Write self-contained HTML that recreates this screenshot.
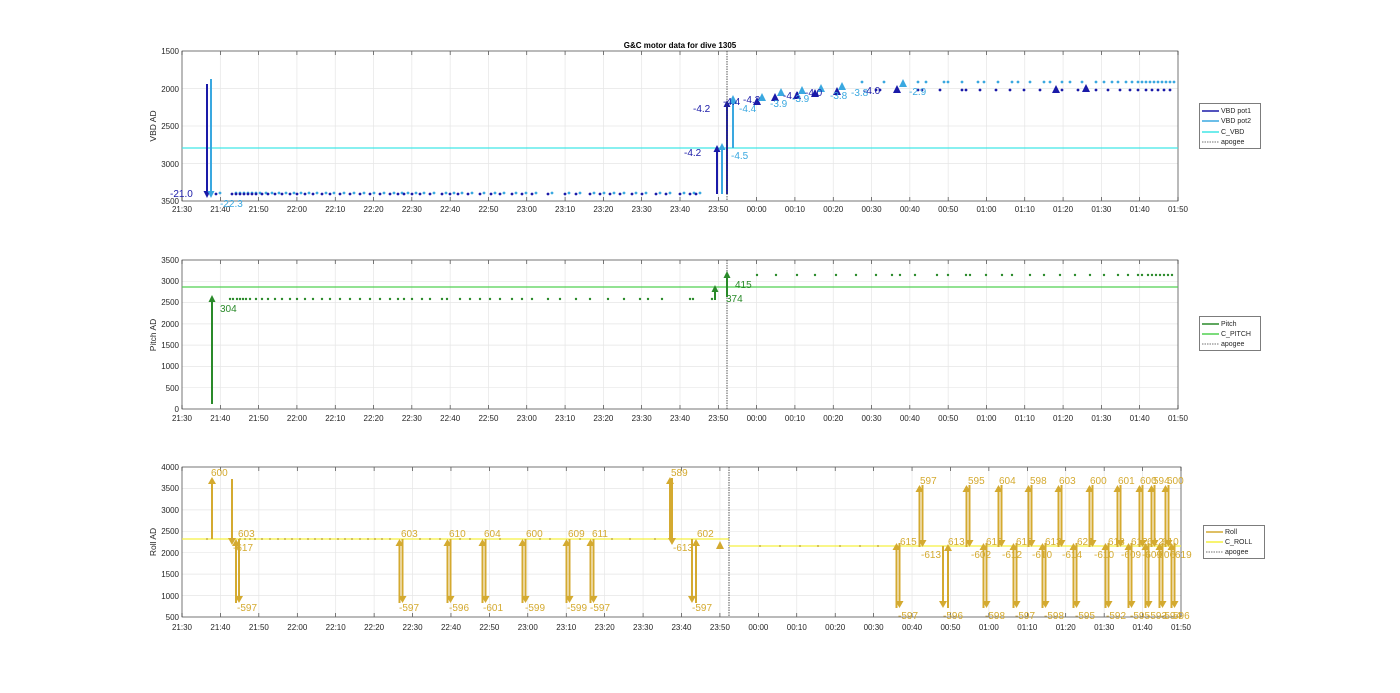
<!DOCTYPE html>
<html><head><meta charset="utf-8"><style>
html,body{margin:0;padding:0;background:#fff;width:1400px;height:693px;overflow:hidden}
svg{display:block;font-family:"Liberation Sans",sans-serif}
.t{font-size:8px;fill:#262626}
.lg{font-size:7px;fill:#262626}
</style></head><body>
<svg id="s" width="1400" height="693" viewBox="0 0 1400 693">
<g id="grid"></g>
<g id="data"></g>
<text x="680" y="48" text-anchor="middle" style="font-size:8px;font-weight:bold" fill="#000">G&amp;C motor data for dive 1305</text>
<g class="t" text-anchor="end">
<text x="179" y="54">1500</text><text x="179" y="92">2000</text><text x="179" y="129">2500</text><text x="179" y="167">3000</text><text x="179" y="204">3500</text>
<text x="179" y="263">3500</text><text x="179" y="284">3000</text><text x="179" y="305">2500</text><text x="179" y="327">2000</text><text x="179" y="348">1500</text><text x="179" y="369">1000</text><text x="179" y="391">500</text><text x="179" y="412">0</text>
<text x="179" y="470">4000</text><text x="179" y="491">3500</text><text x="179" y="513">3000</text><text x="179" y="534">2500</text><text x="179" y="556">2000</text><text x="179" y="577">1500</text><text x="179" y="599">1000</text><text x="179" y="620">500</text>
</g>
<g class="t" text-anchor="middle" style="font-size:8.5px">
<text transform="translate(156,126) rotate(-90)">VBD AD</text>
<text transform="translate(156,335) rotate(-90)">Pitch AD</text>
<text transform="translate(156,542) rotate(-90)">Roll AD</text>
</g>
<g id="xl" class="t" text-anchor="middle"></g>
<g style="font-size:10px">
<text x="170" y="197" fill="#1a1aa8">-21.0</text>
<text x="220" y="207" fill="#3aa8e0">-22.3</text>
<text x="684" y="156" fill="#1a1aa8">-4.2</text>
<text x="693" y="112" fill="#1a1aa8">-4.2</text>
<text x="731" y="159" fill="#3aa8e0">-4.5</text>
<text x="723" y="105" fill="#1a1aa8">-4.4</text>
<text x="739" y="112" fill="#3aa8e0">-4.4</text>
<text x="743" y="103" fill="#1a1aa8">-4.2</text>
<text x="770" y="107" fill="#3aa8e0">-3.9</text>
<text x="783" y="99" fill="#1a1aa8">-4.1</text>
<text x="792" y="102" fill="#3aa8e0">-3.9</text>
<text x="805" y="96" fill="#1a1aa8">-4.0</text>
<text x="830" y="99" fill="#3aa8e0">-3.8</text>
<text x="851" y="96" fill="#3aa8e0">-3.8</text>
<text x="863" y="94" fill="#1a1aa8">-4.0</text>
<text x="909" y="95" fill="#3aa8e0">-2.9</text>
</g>
<g style="font-size:10px" fill="#2a8a2a">
<text x="220" y="312">304</text><text x="726" y="302">374</text><text x="735" y="288">415</text>
</g>
<g style="font-size:10px" fill="#d4aa30">
<text x="211" y="476">600</text><text x="233" y="551">-617</text><text x="238" y="537">603</text><text x="237" y="611">-597</text>
<text x="401" y="537">603</text><text x="399" y="611">-597</text>
<text x="449" y="537">610</text><text x="449" y="611">-596</text>
<text x="484" y="537">604</text><text x="483" y="611">-601</text>
<text x="526" y="537">600</text><text x="525" y="611">-599</text>
<text x="568" y="537">609</text><text x="567" y="611">-599</text>
<text x="592" y="537">611</text><text x="590" y="611">-597</text>
<text x="671" y="476">589</text><text x="673" y="551">-613</text>
<text x="697" y="537">602</text><text x="692" y="611">-597</text>
<text x="900" y="545">615</text><text x="898" y="619">-597</text>
<text x="920" y="484">597</text><text x="921" y="558">-613</text>
<text x="948" y="545">613</text><text x="943" y="619">-596</text>
<text x="968" y="484">595</text><text x="971" y="558">-602</text>
<text x="986" y="545">613</text><text x="985" y="619">-598</text>
<text x="999" y="484">604</text><text x="1002" y="558">-612</text>
<text x="1016" y="545">615</text><text x="1015" y="619">-597</text>
<text x="1030" y="484">598</text><text x="1032" y="558">-610</text>
<text x="1045" y="545">613</text><text x="1044" y="619">-598</text>
<text x="1059" y="484">603</text><text x="1062" y="558">-614</text>
<text x="1077" y="545">621</text><text x="1075" y="619">-595</text>
<text x="1090" y="484">600</text><text x="1094" y="558">-610</text>
<text x="1108" y="545">618</text><text x="1106" y="619">-592</text>
<text x="1118" y="484">601</text><text x="1121" y="558">-609</text>
<text x="1131" y="545">612</text><text x="1130" y="619">-595</text>
<text x="1140" y="484">600</text><text x="1142" y="558">-609</text>
<text x="1147" y="545">612</text><text x="1147" y="619">-593</text>
<text x="1153" y="484">594</text><text x="1155" y="558">-606</text>
<text x="1162" y="545">610</text><text x="1161" y="619">-594</text>
<text x="1167" y="484">600</text><text x="1175" y="558">619</text>
<text x="1173" y="619">596</text>
</g>
<g>
<rect x="1199.5" y="103.5" width="61" height="45" fill="#fff" stroke="#262626" stroke-width="0.6"/>
<line x1="1202" y1="111" x2="1219" y2="111" stroke="#1a1aa8" stroke-width="1.5"/><text class="lg" x="1221" y="113">VBD pot1</text>
<line x1="1202" y1="121" x2="1219" y2="121" stroke="#3aa8e0" stroke-width="1.5"/><text class="lg" x="1221" y="123">VBD pot2</text>
<line x1="1202" y1="132" x2="1219" y2="132" stroke="#40e6e6" stroke-width="1.5"/><text class="lg" x="1221" y="134">C_VBD</text>
<line x1="1202" y1="142" x2="1219" y2="142" stroke="#444" stroke-width="0.8" stroke-dasharray="1.5,1"/><text class="lg" x="1221" y="144">apogee</text>
<rect x="1199.5" y="316.5" width="61" height="34" fill="#fff" stroke="#262626" stroke-width="0.6"/>
<line x1="1202" y1="324" x2="1219" y2="324" stroke="#2a8a2a" stroke-width="1.5"/><text class="lg" x="1221" y="326">Pitch</text>
<line x1="1202" y1="334" x2="1219" y2="334" stroke="#50d050" stroke-width="1.5"/><text class="lg" x="1221" y="336">C_PITCH</text>
<line x1="1202" y1="344" x2="1219" y2="344" stroke="#444" stroke-width="0.8" stroke-dasharray="1.5,1"/><text class="lg" x="1221" y="346">apogee</text>
<rect x="1203.5" y="525.5" width="61" height="33" fill="#fff" stroke="#262626" stroke-width="0.6"/>
<line x1="1206" y1="532" x2="1223" y2="532" stroke="#d4aa30" stroke-width="1.5"/><text class="lg" x="1225" y="534">Roll</text>
<line x1="1206" y1="542" x2="1223" y2="542" stroke="#f5f040" stroke-width="1.5"/><text class="lg" x="1225" y="544">C_ROLL</text>
<line x1="1206" y1="552" x2="1223" y2="552" stroke="#444" stroke-width="0.8" stroke-dasharray="1.5,1"/><text class="lg" x="1225" y="554">apogee</text>
</g>
</svg>
<script>
var NS="http://www.w3.org/2000/svg";
function el(p,t,a){var e=document.createElementNS(NS,t);for(var k in a)e.setAttribute(k,a[k]);p.appendChild(e);return e;}
var G=document.getElementById("grid"),D=document.getElementById("data"),XL=document.getElementById("xl");
var panels=[{y0:51,y1:201,x0:182,x1:1178,ny:[51,88.5,126,163.5,201]},
{y0:260,y1:409,x0:182,x1:1178,ny:[260,281.3,302.6,323.9,345.1,366.4,387.7,409]},
{y0:467,y1:617,x0:182,x1:1181,ny:[467,488.4,509.9,531.3,552.7,574.1,595.6,617]}];
panels.forEach(function(p){
 el(G,"rect",{x:p.x0,y:p.y0,width:p.x1-p.x0,height:p.y1-p.y0,fill:"#fff"});
 for(var i=0;i<=26;i++){var x=p.x0+i*(p.x1-p.x0)/26;
  el(G,"line",{x1:x,y1:p.y0,x2:x,y2:p.y1,stroke:"#e6e6e6","stroke-width":0.7});
  el(G,"line",{x1:x,y1:p.y1,x2:x,y2:p.y1-4,stroke:"#262626","stroke-width":0.6});
  el(G,"line",{x1:x,y1:p.y0,x2:x,y2:p.y0+4,stroke:"#262626","stroke-width":0.6});
 }
 p.ny.forEach(function(y){el(G,"line",{x1:p.x0,y1:y,x2:p.x1,y2:y,stroke:"#e6e6e6","stroke-width":0.7});});
 el(G,"rect",{x:p.x0,y:p.y0,width:p.x1-p.x0,height:p.y1-p.y0,fill:"none",stroke:"#262626","stroke-width":0.6});
});
var HW=3.5;
function arrow(x,y1,y2,c,w){el(D,"line",{x1:x,y1:y1,x2:x,y2:y2+(y2<y1?5:-5),stroke:c,"stroke-width":w||2});
 var d=y2<y1?1:-1;el(D,"polygon",{points:(x-HW)+","+(y2+7*d)+" "+(x+HW)+","+(y2+7*d)+" "+x+","+y2,fill:c});}
function dot(x,y,c,r){el(D,"circle",{cx:x,cy:y,r:r||1.4,fill:c});}
function tri(x,y,c){el(D,"polygon",{points:(x-4)+","+(y+4)+" "+(x+4)+","+(y+4)+" "+x+","+(y-4),fill:c});}
var DB="#1a1aa8",LB="#3aa8e0",CY="#40e6e6",GR="#2a8a2a",LG="#50d050",GO="#d4aa30",YE="#f5f040";
el(D,"line",{x1:182,y1:148,x2:1178,y2:148,stroke:CY,"stroke-width":1.2});
arrow(207,84,198,DB);arrow(211,79,198,LB);
var pre=[216,232,236,240,244,248,252,256,262,268,275,282,290,297,305,313,322,330,340,350,360,370,380,390,398,404,412,420,430,442,450,458,468,480,491,500,512,522,532,548,565,576,590,600,610,620,632,642,656,666,680,690,696];
pre.forEach(function(x){dot(x,194,DB);dot(x+4,193,LB);});
arrow(717,194,145,DB);arrow(722,194,143,LB);arrow(727,194,100,DB);arrow(733,148,97,LB);
[[757,101],[775,97],[797,95],[815,93],[837,91],[897,89],[1056,89],[1086,88]].forEach(function(a){tri(a[0],a[1],DB);});
[[762,97],[781,92],[802,90],[821,88],[842,86],[903,83],[733,99]].forEach(function(a){tri(a[0],a[1],LB);});
[876,880,918,922,940,962,966,980,996,1010,1024,1040,1062,1078,1096,1108,1120,1130,1138,1146,1152,1158,1164,1170].forEach(function(x){dot(x,90,DB);});
[862,884,918,926,944,948,962,978,984,998,1012,1018,1030,1044,1050,1062,1070,1082,1096,1104,1112,1118,1126,1132,1138,1142,1146,1150,1154,1158,1162,1166,1170,1174].forEach(function(x){dot(x,82,LB);});
[[51,201,727],[260,409,727],[467,617,729]].forEach(function(a){el(D,"line",{x1:a[2],y1:a[0],x2:a[2],y2:a[1],stroke:"#444","stroke-width":0.9,"stroke-dasharray":"1.5,1"});});
el(D,"line",{x1:182,y1:287,x2:1178,y2:287,stroke:LG,"stroke-width":1.2});
arrow(212,404,295,GR);arrow(715,300,285,GR);arrow(727,297,271,GR);
[230,233,237,240,243,246,250,256,262,268,275,282,290,297,305,313,322,330,340,350,360,370,380,390,398,404,412,422,430,442,447,460,470,480,490,500,512,522,532,548,560,576,590,608,624,640,648,662,690,693,712].forEach(function(x){dot(x,299,GR,1.2);});
[757,776,797,815,836,856,876,892,900,915,937,948,966,970,986,1002,1012,1030,1044,1060,1075,1090,1104,1118,1128,1138,1142,1148,1152,1156,1160,1164,1168,1172].forEach(function(x){dot(x,275,GR,1.2);});
el(D,"line",{x1:182,y1:539,x2:729,y2:539,stroke:YE,"stroke-width":1.2});
el(D,"line",{x1:729,y1:546,x2:1181,y2:546,stroke:YE,"stroke-width":1.2});
[207,240,245,250,255,262,270,278,285,292,300,308,315,322,330,338,345,352,360,368,375,382,390,420,430,440,460,470,500,540,550,580,612,630,655].forEach(function(x){dot(x,539,"#c8b040",1);});
[760,780,800,818,840,860,878].forEach(function(x){dot(x,546,"#c8b040",1);});
HW=4;
arrow(212,539,477,GO);arrow(232,479,545,GO);arrow(236,603,539,GO);arrow(239,539,603,GO);
[401,449,484,524,568,592].forEach(function(x){arrow(x-1.5,603,539,GO);arrow(x+1.5,539,603,GO);});
arrow(670,539,477,GO);arrow(672,478,545,GO);arrow(692,539,603,GO);arrow(696,603,539,GO);
tri(720,545,GO);
var post=[[898,543],[921,485],[968,485],[985,543],[1000,485],[1015,543],[1030,485],[1044,543],[1060,485],[1075,543],[1091,485],[1107,543],[1119,485],[1130,543],[1141,485],[1147,543],[1153,485],[1161,543],[1167,485],[1173,543]];
post.forEach(function(a){var x=a[0];if(a[1]<500){arrow(x-1.5,547,485,GO);arrow(x+1.5,485,547,GO);}else{arrow(x-1.5,608,543,GO);arrow(x+1.5,543,608,GO);}});
arrow(943,546,608,GO);arrow(948,608,544,GO);
var labs=["21:30","21:40","21:50","22:00","22:10","22:20","22:30","22:40","22:50","23:00","23:10","23:20","23:30","23:40","23:50","00:00","00:10","00:20","00:30","00:40","00:50","01:00","01:10","01:20","01:30","01:40","01:50"];
[[212,1178],[421,1178],[630,1181]].forEach(function(a){for(var i=0;i<=26;i++){var t=document.createElementNS(NS,"text");t.setAttribute("x",182+i*(a[1]-182)/26);t.setAttribute("y",a[0]);t.textContent=labs[i];XL.appendChild(t);}});
</script>
</body></html>
